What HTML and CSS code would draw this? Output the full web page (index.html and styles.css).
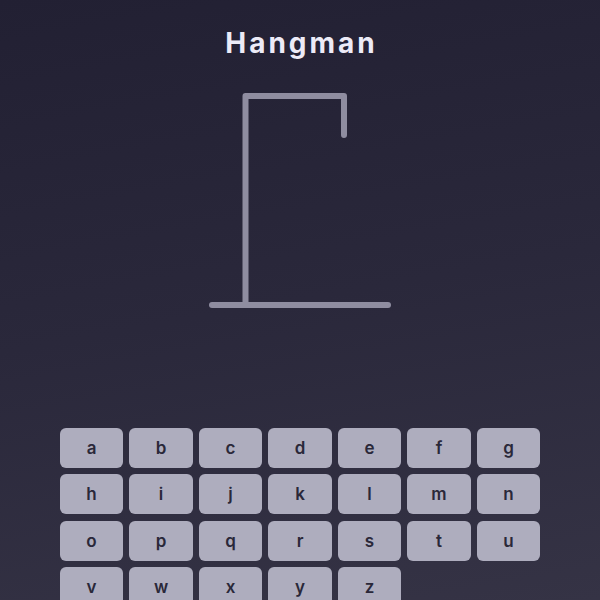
FILE: index.html
```html
<!DOCTYPE html>
<html>
<head>
    <title>Hangman</title>
    <link rel="stylesheet" href="styles.css">
</head>
<body>
    <main class="game">
        <h1 class="title">Hangman</h1>

        <!-- Gallows: base, pole, beam and rope -->
        <svg class="gallows" width="200" height="230" viewBox="0 0 200 230">
            <g stroke="#8f8da0" stroke-width="6" stroke-linecap="round" stroke-linejoin="round" fill="none">
                <line x1="12" y1="220" x2="188" y2="220" />
                <polyline points="45.5,220 45.5,11 144,11 144,50" />
            </g>
        </svg>

        <div class="keyboard" id="keyboard"></div>
    </main>

    <script>
        // Build one button per letter
        const keyboard = document.getElementById('keyboard');
        'abcdefghijklmnopqrstuvwxyz'.split('').forEach(function (letter) {
            const key = document.createElement('button');
            key.className = 'key';
            key.textContent = letter;
            keyboard.appendChild(key);
        });
    </script>
</body>
</html>
```

FILE: styles.css
```css
html {
    height: 100%;
}

body {
    margin: 0;
    min-height: 100%;
    font-family: Inter, Roboto, sans-serif;
    background: linear-gradient(170deg, #222033 0%, #2a283b 50%, #353345 100%);
    color: #ecebf7;
}

.game {
    display: flex;
    flex-direction: column;
    align-items: center;
    padding-top: 24px;
}

.title {
    margin: 0;
    font-size: 28px;
    font-weight: 700;
    letter-spacing: 3px;
    line-height: 38px;
    padding-left: 3px;
}

.gallows {
    display: block;
    margin-top: 23px;
}

.keyboard {
    display: grid;
    grid-template-columns: repeat(7, 1fr);
    gap: 6.4px;
    width: 480px;
    margin-top: 113px;
}

.key {
    height: 40px;
    border: none;
    border-radius: 6px;
    background-color: #aeadbe;
    color: #2a2839;
    font-family: Inter, Roboto, sans-serif;
    font-size: 17px;
    font-weight: 600;
    cursor: pointer;
}
```
